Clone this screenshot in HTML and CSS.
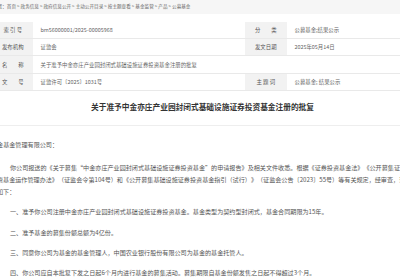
FILE: index.html
```html
<!DOCTYPE html>
<html lang="zh-CN">
<head>
    <meta charset="UTF-8">
    <meta name="viewport" content="width=device-width, initial-scale=1.0">
    <title>关于准予中金亦庄产业园封闭式基础设施证券投资基金注册的批复</title>
    <link rel="stylesheet" href="styles.css">
</head>
<body>
    <div class="page">
        <div class="crumb">
            位置：<a href="javascript:;">首页</a><i>&gt;</i><a href="javascript:;">政务信息</a><i>&gt;</i><a href="javascript:;">政府信息公开</a><i>&gt;</i><a href="javascript:;">主动公开目录</a><i>&gt;</i><a href="javascript:;">按主题查看</a><i>&gt;</i><a href="javascript:;">基金监管</a><i>&gt;</i><a href="javascript:;">产品</a><i>&gt;</i><a href="javascript:;">公募基金</a>
        </div>

        <table class="info">
            <colgroup>
                <col class="c-label">
                <col class="c-value">
                <col class="c-label2">
                <col>
            </colgroup>
            <tr>
                <th>索 引 号</th>
                <td>bm56000001/2025-00005968</td>
                <th>分&emsp;&emsp;类</th>
                <td>公募基金;结果公示</td>
            </tr>
            <tr>
                <th>发布机构</th>
                <td>证监会</td>
                <th>发文日期</th>
                <td>2025年05月14日</td>
            </tr>
            <tr class="tall">
                <th>名&emsp;&emsp;称</th>
                <td colspan="3">关于准予中金亦庄产业园封闭式基础设施证券投资基金注册的批复</td>
            </tr>
            <tr>
                <th>文&emsp;&emsp;号</th>
                <td>证监许可〔2025〕1031号</td>
                <th>主 题 词</th>
                <td>公募基金; 结果公示</td>
            </tr>
        </table>

        <h1 class="title">关于准予中金亦庄产业园封闭式基础设施证券投资基金注册的批复</h1>

        <div class="letter">
            <p class="to">中金基金管理有限公司：</p>
            <p>你公司报送的《关于募集“中金亦庄产业园封闭式基础设施证券投资基金”的申请报告》及相关文件收悉。根据《证券投资基金法》《公开募集证券投资基金运作管理办法》（证监会令第104号）和《公开募集基础设施证券投资基金指引（试行）》（证监会公告〔2023〕55号）等有关规定，经审查，现批复如下：</p>
            <p>一、准予你公司注册中金亦庄产业园封闭式基础设施证券投资基金。基金类型为契约型封闭式，基金合同期限为15年。</p>
            <p>二、准予基金的募集份额总额为4亿份。</p>
            <p>三、同意你公司为基金的基金管理人，中国农业银行股份有限公司为基金的基金托管人。</p>
            <p>四、你公司应自本批复下发之日起6个月内进行基金的募集活动。募集期限自基金份额发售之日起不得超过3个月。</p>
        </div>
    </div>
</body>
</html>
```

FILE: styles.css
```css
*{
    margin: 0;
    padding: 0;
}
a{
    color: inherit;
    text-decoration: none;
}
body{
    overflow: hidden;
    background-color: #fff;
    font-family: "Noto Sans CJK SC", "Noto Sans", sans-serif;
    color: #555;
}
.page{
    width: 419px;
    margin-left: -7px;
}

/* 面包屑 */
.crumb{
    height: 14px;
    line-height: 13px;
    font-size: 4.6px;
    color: #666;
    background-color: #f6f6f6;
    white-space: nowrap;
}
.crumb i{
    font-style: normal;
    margin: 0 1px;
}

/* 信息表 */
.info{
    width: 100%;
    margin-top: 8px;
    border-collapse: collapse;
    table-layout: fixed;
    font-size: 5.4px;
}
.c-label{
    width: 40px;
}
.c-value{
    width: 212px;
}
.c-label2{
    width: 42px;
}
.info th,
.info td{
    height: 16px;
    border-bottom: 1px solid #e9e9e9;
    white-space: nowrap;
}
.info .tall th,
.info .tall td{
    height: 17px;
}
.info th{
    font-weight: normal;
    text-align: center;
    color: #555;
    background-color: #f2f2f2;
    border-right: 1px solid #fff;
}
.info td{
    padding-left: 7px;
    color: #666;
}

/* 标题 */
.title{
    margin-top: 10px;
    padding-bottom: 12px;
    border-bottom: 1px solid #eee;
    font-size: 7.7px;
    line-height: 12px;
    text-align: center;
    color: #333;
}

/* 正文 */
.letter{
    width: 420.8px;
    margin-left: 4px;
    padding-top: 13px;
    font-size: 6.1px;
    line-height: 12.2px;
    color: #555;
    text-spacing-trim: space-all;
}
.letter p{
    text-indent: 13px;
    margin-bottom: 8px;
}
.letter .to{
    text-indent: 0;
    margin-left: -6px;
    margin-bottom: 10.5px;
}
```
